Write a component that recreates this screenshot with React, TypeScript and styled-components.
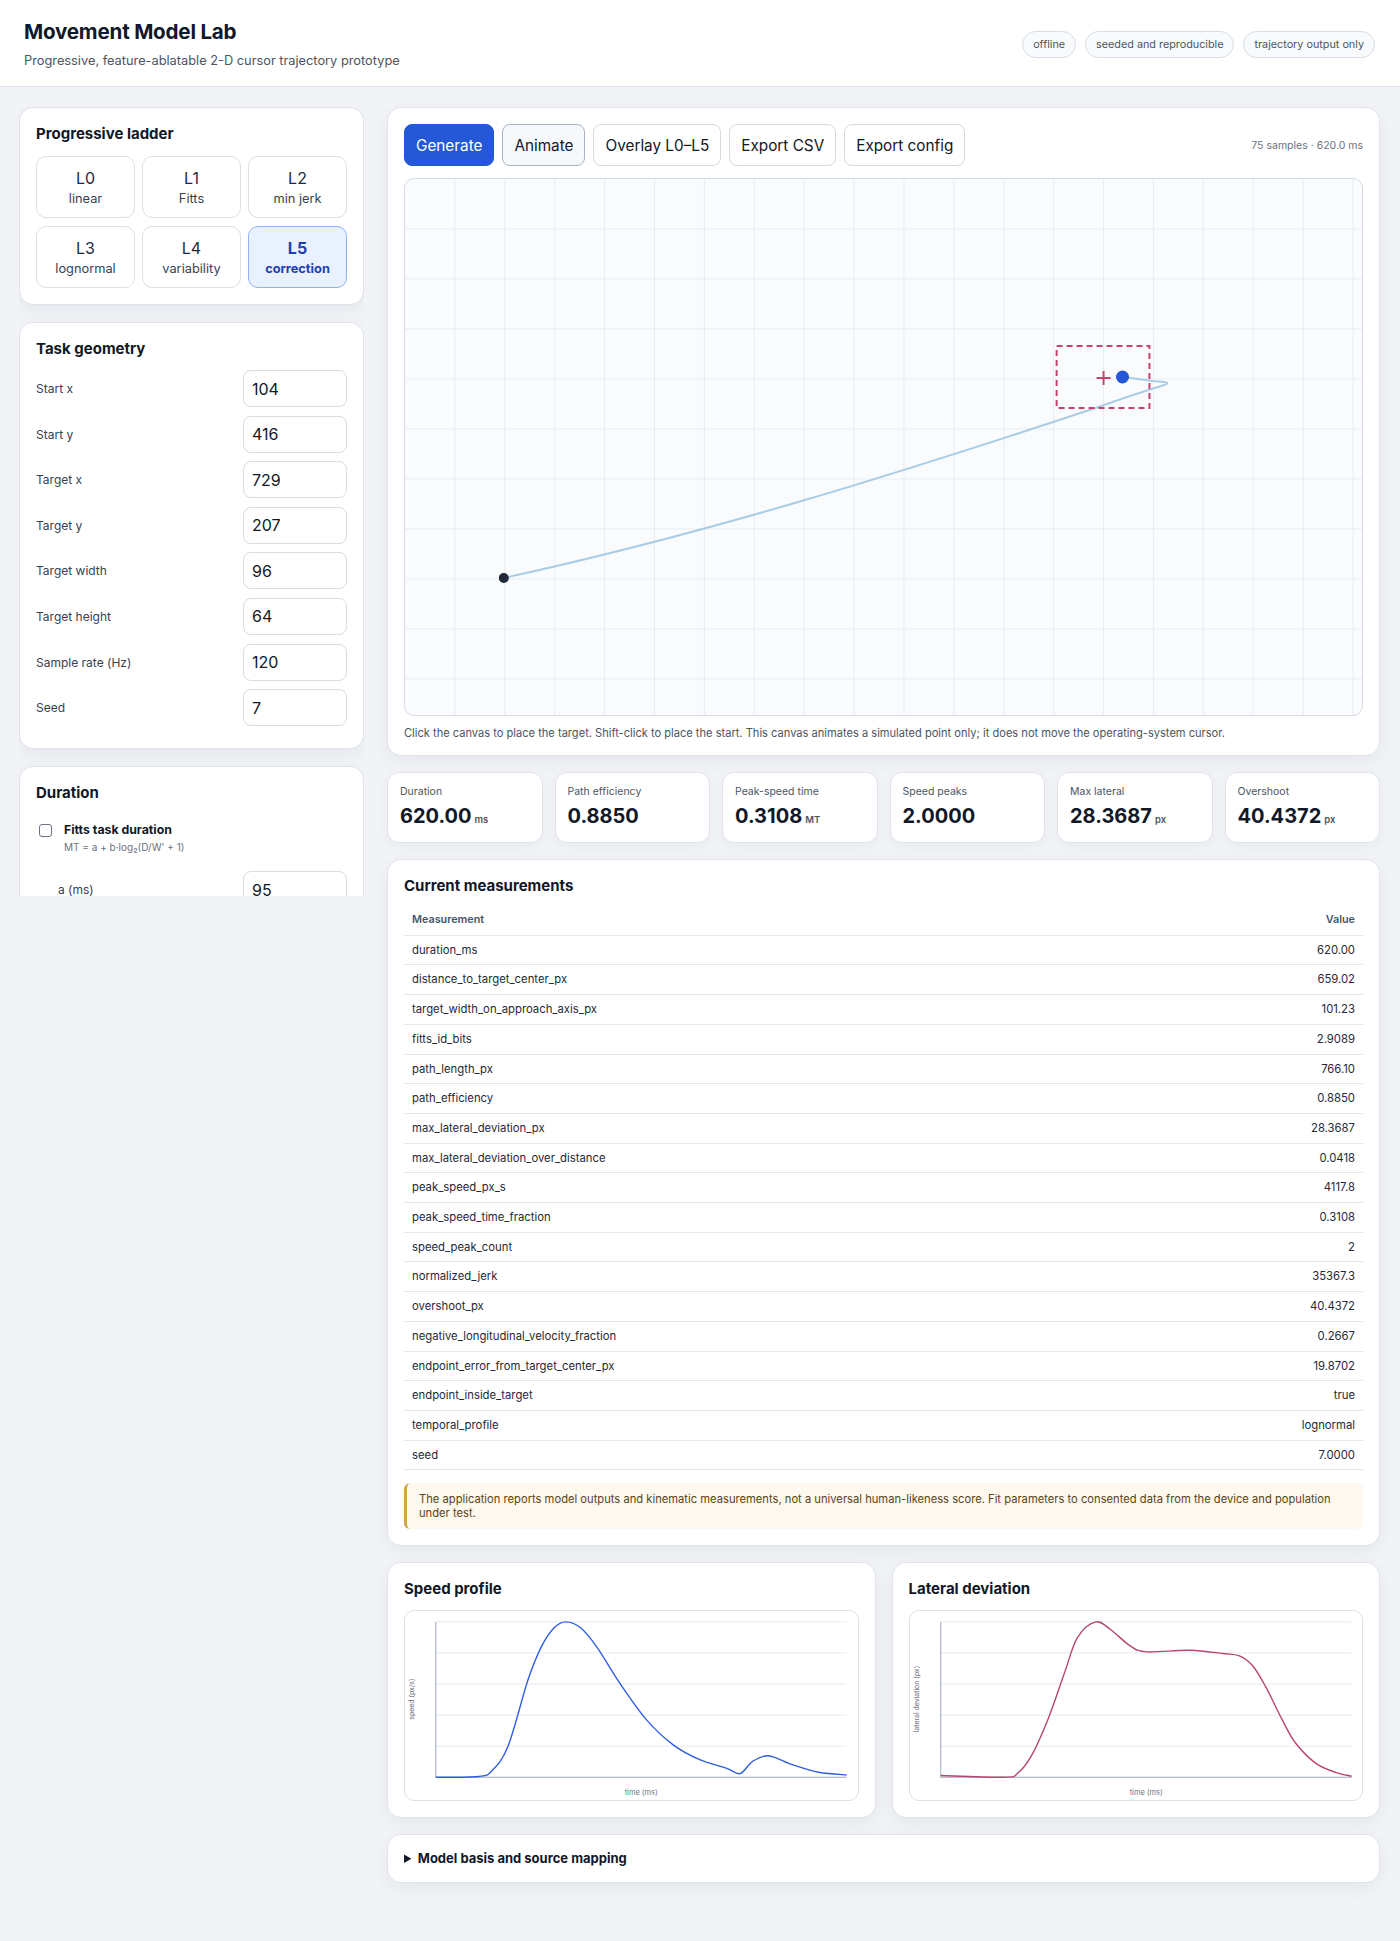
import React, { useState } from 'react'
import styled, { createGlobalStyle, css } from 'styled-components'

type Pt = [number, number]

const GlobalStyle = createGlobalStyle`
  * { box-sizing: border-box; }
  body {
    margin: 0;
    background: #f1f3f7;
    font-family: Inter, "Noto Sans", "Liberation Sans", sans-serif;
    color: #111827;
  }
`

const ladder = [
  { id: 'L0', name: 'linear' },
  { id: 'L1', name: 'Fitts' },
  { id: 'L2', name: 'min jerk' },
  { id: 'L3', name: 'lognormal' },
  { id: 'L4', name: 'variability' },
  { id: 'L5', name: 'correction' },
]

const geometry: [string, string][] = [
  ['Start x', '104'],
  ['Start y', '416'],
  ['Target x', '729'],
  ['Target y', '207'],
  ['Target width', '96'],
  ['Target height', '64'],
  ['Sample rate (Hz)', '120'],
  ['Seed', '7'],
]

const stats = [
  { label: 'Duration', value: '620.00', unit: 'ms' },
  { label: 'Path efficiency', value: '0.8850' },
  { label: 'Peak-speed time', value: '0.3108', unit: 'MT' },
  { label: 'Speed peaks', value: '2.0000' },
  { label: 'Max lateral', value: '28.3687', unit: 'px' },
  { label: 'Overshoot', value: '40.4372', unit: 'px' },
]

const measurements: [string, string][] = [
  ['duration_ms', '620.00'],
  ['distance_to_target_center_px', '659.02'],
  ['target_width_on_approach_axis_px', '101.23'],
  ['fitts_id_bits', '2.9089'],
  ['path_length_px', '766.10'],
  ['path_efficiency', '0.8850'],
  ['max_lateral_deviation_px', '28.3687'],
  ['max_lateral_deviation_over_distance', '0.0418'],
  ['peak_speed_px_s', '4117.8'],
  ['peak_speed_time_fraction', '0.3108'],
  ['speed_peak_count', '2'],
  ['normalized_jerk', '35367.3'],
  ['overshoot_px', '40.4372'],
  ['negative_longitudinal_velocity_fraction', '0.2667'],
  ['endpoint_error_from_target_center_px', '19.8702'],
  ['endpoint_inside_target', 'true'],
  ['temporal_profile', 'lognormal'],
  ['seed', '7.0000'],
]

const speedPts: Pt[] = [
  [31, 168], [73.7, 167.2], [87, 162], [103.7, 137], [123.7, 70.3], [137, 37],
  [150.3, 17], [162, 11], [177, 17], [193.7, 37], [217, 73.7], [243.7, 110.3],
  [270.3, 135.3], [297, 150.3], [323.7, 158.7], [337.7, 164.3], [350.3, 152],
  [366.3, 146.3], [390.3, 155.3], [417, 163], [445, 165.7],
]

const lateralPts: Pt[] = [
  [31, 166.3], [95.3, 168], [108.7, 163.7], [122, 147], [138.7, 110.3],
  [155.3, 63.7], [168.7, 27], [187, 11], [202, 18.7], [222, 35.3], [238.7, 41.3],
  [282, 39.7], [315.3, 43], [332, 45.3], [345.3, 55.3], [358.7, 77],
  [375.3, 110.3], [388.7, 133.7], [408.7, 153.7], [428.7, 163], [445, 167],
]

// catmull-rom -> cubic bezier
const smooth = (pts: Pt[]) => {
  let d = `M${pts[0][0]},${pts[0][1]}`
  for (let i = 0; i < pts.length - 1; i++) {
    const p0 = pts[i - 1] || pts[i]
    const p1 = pts[i]
    const p2 = pts[i + 1]
    const p3 = pts[i + 2] || p2
    const c1x = p1[0] + (p2[0] - p0[0]) / 6
    const c1y = p1[1] + (p2[1] - p0[1]) / 6
    const c2x = p2[0] - (p3[0] - p1[0]) / 6
    const c2y = p2[1] - (p3[1] - p1[1]) / 6
    d += ` C${c1x.toFixed(1)},${c1y.toFixed(1)} ${c2x.toFixed(1)},${c2y.toFixed(1)} ${p2[0]},${p2[1]}`
  }
  return d
}

const Chart: React.FC<{ points: Pt[]; color: string; yLabel: string }> = ({ points, color, yLabel }) => {
  const grid = [11, 42.4, 73.8, 105.2, 136.6]
  return (
    <ChartBox>
      <svg width="100%" height="189" viewBox="0 0 456 191" preserveAspectRatio="none">
        {grid.map(y => <line key={y} x1={31} x2={445} y1={y} y2={y} stroke="#e6eaf0" strokeWidth={1} />)}
        <line x1={31} x2={31} y1={11} y2={168} stroke="#9aa6b6" strokeWidth={1} />
        <line x1={31} x2={445} y1={168} y2={168} stroke="#9aa6b6" strokeWidth={1} />
        <path d={smooth(points)} fill="none" stroke={color} strokeWidth={1.4} />
        <text x={238} y={186} fontSize={7.5} fill="#6b7280" textAnchor="middle" fontFamily="Inter, sans-serif">time (ms)</text>
        <text x={9} y={89} fontSize={7} fill="#6b7280" textAnchor="middle" fontFamily="Inter, sans-serif"
          transform="rotate(-90 9 89)">{yLabel}</text>
      </svg>
    </ChartBox>
  )
}

const TrajectoryCanvas = () => {
  const vLines = Array.from({ length: 19 }, (_, i) => (i + 1) * 50)
  const hLines = Array.from({ length: 10 }, (_, i) => (i + 1) * 50)
  return (
    <CanvasFrame>
      <svg width="100%" height="536" viewBox="0 0 959 536" preserveAspectRatio="none">
        {vLines.map(x => <line key={'v' + x} x1={x} x2={x} y1={0} y2={536} stroke="#e8ecf2" strokeWidth={1} />)}
        {hLines.map(y => <line key={'h' + y} x1={0} x2={959} y1={y} y2={y} stroke="#e8ecf2" strokeWidth={1} />)}
        <path
          d="M99,399 C300,355 480,299 692,229 C720,219 748,210 761,206 Q767,204 760,203 C745,202 730,199 719,198"
          fill="none" stroke="#a9cde4" strokeWidth={2} strokeLinecap="round" strokeLinejoin="round"
        />
        <rect x={653} y={167} width={93} height={62} fill="none" stroke="#c8426f" strokeWidth={2} strokeDasharray="6 4" />
        <line x1={693} x2={707} y1={199} y2={199} stroke="#c8426f" strokeWidth={2} />
        <line x1={700} x2={700} y1={192} y2={206} stroke="#c8426f" strokeWidth={2} />
        <circle cx={99} cy={399} r={5} fill="#1f2937" />
        <circle cx={719} cy={198} r={6.5} fill="#2457d6" />
      </svg>
    </CanvasFrame>
  )
}

const App: React.FC = () => {
  const [level, setLevel] = useState('L5')
  const [fitts, setFitts] = useState(false)

  return (
    <Page>
      <GlobalStyle />
      <Header>
        <div>
          <Title>Movement Model Lab</Title>
          <Subtitle>Progressive, feature-ablatable 2-D cursor trajectory prototype</Subtitle>
        </div>
        <Badges>
          <Badge>offline</Badge>
          <Badge>seeded and reproducible</Badge>
          <Badge>trajectory output only</Badge>
        </Badges>
      </Header>

      <Layout>
        <Sidebar>
          <Card>
            <CardTitle>Progressive ladder</CardTitle>
            <LadderGrid>
              {ladder.map(item => (
                <LadderButton key={item.id} active={item.id === level} onClick={() => setLevel(item.id)}>
                  <span>{item.id}</span>
                  <small>{item.name}</small>
                </LadderButton>
              ))}
            </LadderGrid>
          </Card>

          <Card pb={22}>
            <CardTitle>Task geometry</CardTitle>
            <FieldList>
              {geometry.map(([label, value]) => (
                <Field key={label}>
                  <label>{label}</label>
                  <NumberInput defaultValue={value} />
                </Field>
              ))}
            </FieldList>
          </Card>

          <Card>
            <CardTitle>Duration</CardTitle>
            <CheckRow>
              <CheckBox type="checkbox" checked={fitts} onChange={() => setFitts(!fitts)} />
              <div>
                <strong>Fitts task duration</strong>
                <Formula>MT = a + b·log₂(D/W' + 1)</Formula>
              </div>
            </CheckRow>
            <SubFields>
              <Field>
                <label>a (ms)</label>
                <NumberInput defaultValue="95" />
              </Field>
              <Field>
                <label>b (ms/bit)</label>
                <NumberInput defaultValue="160" />
              </Field>
            </SubFields>
          </Card>
        </Sidebar>

        <Main>
          <Card pb={14}>
            <Toolbar>
              <ToolButton variant="primary">Generate</ToolButton>
              <ToolButton variant="pressed">Animate</ToolButton>
              <ToolButton>Overlay L0–L5</ToolButton>
              <ToolButton>Export CSV</ToolButton>
              <ToolButton>Export config</ToolButton>
              <SampleInfo>75 samples · 620.0 ms</SampleInfo>
            </Toolbar>
            <TrajectoryCanvas />
            <Caption>
              Click the canvas to place the target. Shift-click to place the start. This canvas animates a simulated point only; it does not move the operating-system cursor.
            </Caption>
          </Card>

          <StatGrid>
            {stats.map(stat => (
              <StatCard key={stat.label}>
                <StatLabel>{stat.label}</StatLabel>
                <StatValue>
                  {stat.value}
                  {stat.unit && <small>{stat.unit}</small>}
                </StatValue>
              </StatCard>
            ))}
          </StatGrid>

          <Card>
            <CardTitle>Current measurements</CardTitle>
            <Table>
              <thead>
                <tr>
                  <th>Measurement</th>
                  <th>Value</th>
                </tr>
              </thead>
              <tbody>
                {measurements.map(([key, value]) => (
                  <tr key={key}>
                    <td>{key}</td>
                    <td>{value}</td>
                  </tr>
                ))}
              </tbody>
            </Table>
            <Note>
              The application reports model outputs and kinematic measurements, not a universal human-likeness score. Fit parameters to consented data from the device and population under test.
            </Note>
          </Card>

          <ChartGrid>
            <Card>
              <CardTitle>Speed profile</CardTitle>
              <Chart points={speedPts} color="#2f5fe0" yLabel="speed (px/s)" />
            </Card>
            <Card>
              <CardTitle>Lateral deviation</CardTitle>
              <Chart points={lateralPts} color="#b84471" yLabel="lateral deviation (px)" />
            </Card>
          </ChartGrid>

          <Card>
            <Details>
              <summary>Model basis and source mapping</summary>
            </Details>
          </Card>
        </Main>
      </Layout>
    </Page>
  )
}

const Page = styled.div`
  min-height: 100vh;
  background: #f1f3f7;
`

const Header = styled.header`
  display: flex;
  align-items: center;
  justify-content: space-between;
  padding: 20px 25px 17px 24px;
  background: #fff;
  border-bottom: 1px solid #dde3ea;
`

const Title = styled.h1`
  margin: 0;
  font-size: 20.6px;
  line-height: 24px;
  font-weight: 700;
  letter-spacing: -0.01em;
  color: #111827;
`

const Subtitle = styled.p`
  margin: 9px 0 0;
  font-size: 12.8px;
  line-height: 16px;
  color: #4b5563;
`

const Badges = styled.div`
  display: flex;
  gap: 9px;
`

const Badge = styled.span`
  display: inline-flex;
  align-items: center;
  height: 27px;
  padding: 0 10px;
  border: 1px solid #d6dde6;
  border-radius: 999px;
  background: #f8fafc;
  font-size: 10.8px;
  color: #4b5563;
`

const Layout = styled.div`
  display: grid;
  grid-template-columns: 345px 1fr;
  column-gap: 23px;
  padding: 20px 20px 40px 19px;
  align-items: start;
`

const Sidebar = styled.aside`
  display: flex;
  flex-direction: column;
  gap: 17px;
  height: 789px;
  overflow: hidden;
`

const Main = styled.main`
  display: flex;
  flex-direction: column;
  gap: 16px;
  min-width: 0;
`

const Card = styled.section<{ pb?: number; pt?: number }>`
  flex-shrink: 0;
  background: #fff;
  border: 1px solid #dfe4eb;
  border-radius: 14px;
  padding: ${p => p.pt ?? 16}px 16px ${p => p.pb ?? 16}px;
  box-shadow: 0 6px 18px rgba(15, 23, 42, 0.05);
`

const CardTitle = styled.h2`
  margin: 0;
  font-size: 15px;
  line-height: 19px;
  font-weight: 700;
  color: #111827;
`

const LadderGrid = styled.div`
  display: grid;
  grid-template-columns: repeat(3, 1fr);
  gap: 8px 7px;
  margin-top: 13px;
`

const LadderButton = styled.button<{ active?: boolean }>`
  display: flex;
  flex-direction: column;
  align-items: center;
  justify-content: center;
  gap: 3px;
  height: 62px;
  border: 1px solid #d9e0e8;
  border-radius: 10px;
  background: #fff;
  color: #1f2937;
  font-family: inherit;
  cursor: pointer;
  span { font-size: 16px; line-height: 20px; }
  small { font-size: 12.8px; line-height: 16px; color: #374151; }
  ${p => p.active && css`
    background: #eaf1fe;
    border-color: #8fb2f4;
    color: #1e40af;
    span, small { font-weight: 700; color: #1e40af; }
  `}
`

const FieldList = styled.div`
  display: flex;
  flex-direction: column;
  gap: 8.6px;
  margin-top: 12px;
`

const Field = styled.div`
  display: flex;
  align-items: center;
  justify-content: space-between;
  label { font-size: 12px; color: #374151; }
`

const NumberInput = styled.input`
  width: 104px;
  height: 37px;
  padding: 0 8px;
  border: 1px solid #d6dde6;
  border-radius: 8px;
  font-family: inherit;
  font-size: 16px;
  color: #111827;
  background: #fff;
`

const CheckRow = styled.div`
  display: flex;
  align-items: flex-start;
  gap: 12px;
  margin-top: 20px;
  padding-left: 3px;
  strong { display: block; font-size: 12.3px; line-height: 16px; font-weight: 700; }
`

const CheckBox = styled.input`
  appearance: none;
  width: 13px;
  height: 13px;
  margin: 2px 0 0;
  border: 1px solid #6b7280;
  border-radius: 3px;
  background: #fff;
`

const Formula = styled.div`
  margin-top: 2px;
  font-size: 10px;
  line-height: 14px;
  color: #6b7280;
`

const SubFields = styled(FieldList)`
  margin-top: 17px;
  padding-left: 22px;
`

const Toolbar = styled.div`
  display: flex;
  align-items: center;
  gap: 8px;
`

const ToolButton = styled.button<{ variant?: 'primary' | 'pressed' }>`
  height: 42px;
  padding: 0 11px;
  border: 1px solid #d3dae3;
  border-radius: 8px;
  background: #fff;
  color: #111827;
  font-family: inherit;
  font-size: 15.3px;
  cursor: pointer;
  ${p => p.variant === 'primary' && css`
    background: #2458d6;
    border-color: #2458d6;
    color: #fff;
  `}
  ${p => p.variant === 'pressed' && css`
    background: #f6f8fb;
    border-color: #a9b4c3;
  `}
`

const SampleInfo = styled.span`
  margin-left: auto;
  font-size: 10.5px;
  color: #6b7280;
`

const CanvasFrame = styled.div`
  margin-top: 12px;
  border: 1px solid #d5dce5;
  border-radius: 10px;
  overflow: hidden;
  background: #fafbfd;
  svg { display: block; }
`

const Caption = styled.p`
  margin: 9px 0 0;
  font-size: 11.1px;
  line-height: 16px;
  color: #4b5563;
`

const StatGrid = styled.div`
  display: grid;
  grid-template-columns: repeat(6, 1fr);
  gap: 12px;
`

const StatCard = styled.div`
  height: 71px;
  padding: 12px;
  background: #fff;
  border: 1px solid #dfe4eb;
  border-radius: 12px;
  box-shadow: 0 4px 12px rgba(15, 23, 42, 0.04);
`

const StatLabel = styled.div`
  font-size: 10.5px;
  line-height: 13px;
  color: #4b5563;
`

const StatValue = styled.div`
  margin-top: 5px;
  font-size: 20px;
  line-height: 26px;
  font-weight: 700;
  color: #111827;
  small {
    margin-left: 3px;
    font-size: 9.5px;
    font-weight: 600;
    color: #4b5563;
  }
`

const Table = styled.table`
  width: 100%;
  margin-top: 11px;
  border-collapse: collapse;
  font-size: 11.3px;
  th, td {
    padding: 7px 8px;
    line-height: 14.7px;
    border-bottom: 1px solid #e3e8ee;
    text-align: left;
  }
  th {
    font-size: 10.8px;
    font-weight: 600;
    color: #475569;
  }
  td { color: #1f2937; }
  th:last-child, td:last-child { text-align: right; }
`

const Note = styled.div`
  margin-top: 13px;
  padding: 9px 12px;
  border-left: 3px solid #d4a546;
  border-radius: 6px;
  background: #fdf9ee;
  font-size: 11.2px;
  line-height: 14px;
  color: #5b4314;
`

const ChartGrid = styled.div`
  display: grid;
  grid-template-columns: 1fr 1fr;
  gap: 16px;
`

const ChartBox = styled.div`
  margin-top: 12px;
  border: 1px solid #d9e0e8;
  border-radius: 10px;
  overflow: hidden;
  svg { display: block; }
`

const Details = styled.details`
  summary {
    font-size: 13px;
    line-height: 15px;
    font-weight: 700;
    color: #111827;
    cursor: pointer;
  }
`

export default App
